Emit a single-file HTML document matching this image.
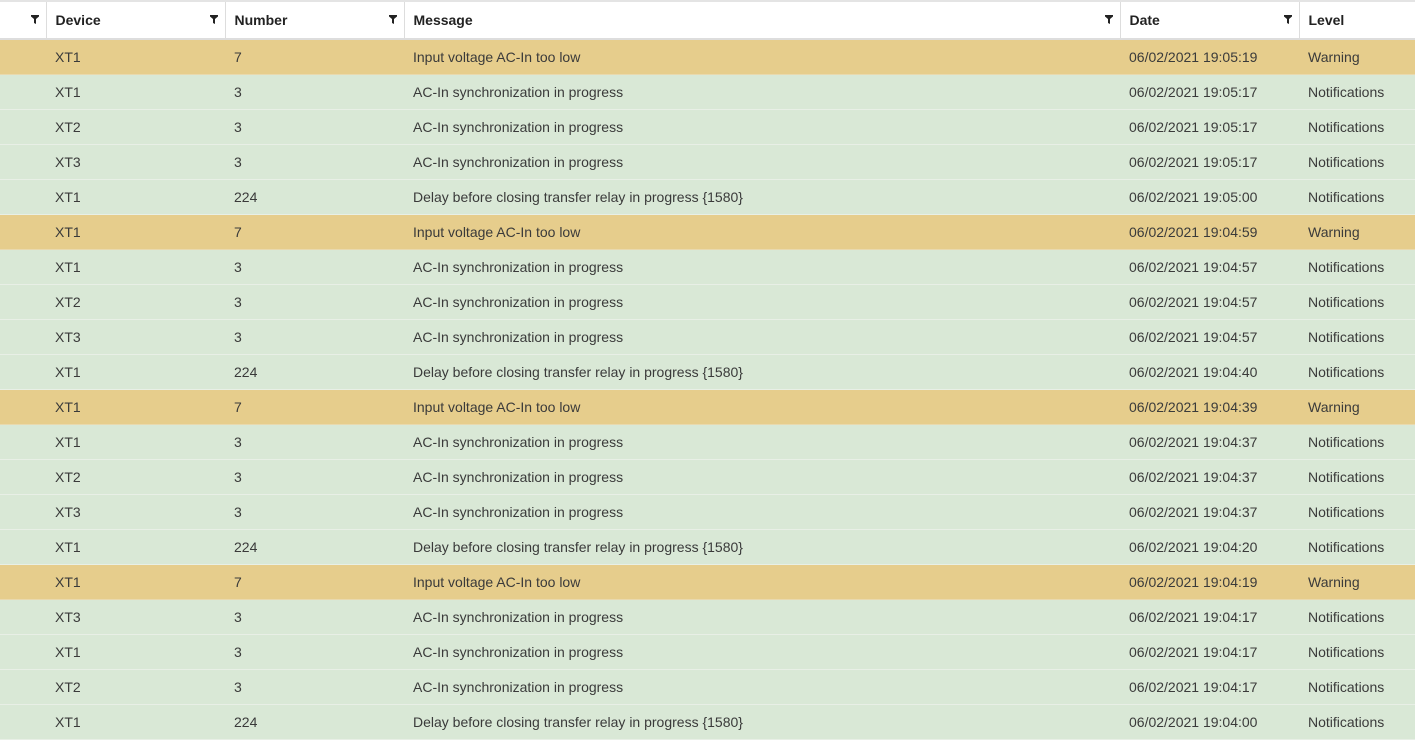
<!DOCTYPE html>
<html><head><style>
body{margin:0;width:1415px;height:733px;overflow:hidden;background:#fff;font-family:"Liberation Sans",Arial,sans-serif;font-size:14px;color:#3a3a3a}
table{border-collapse:collapse;table-layout:fixed;width:1415px}
th{height:36px;text-align:left;font-weight:bold;padding:0 0 0 9px;border-left:1px solid #ddd;border-top:2px solid #e4e4e4;border-bottom:2px solid #ddd;position:relative;color:#222}
th:first-child{border-left:none}
th svg{position:absolute;right:7px;top:13px}
td{height:34px;padding:0 0 0 9px;border-bottom:1px solid #e8efe6;white-space:nowrap}
tr.w td{background:#e6cd8c;border-bottom-color:#e9d9ae}
tr.n td{background:#d9e8d6}
</style></head><body>
<table>
<colgroup><col style="width:46px"><col style="width:179px"><col style="width:179px"><col style="width:716px"><col style="width:179px"><col style="width:116px"></colgroup>
<thead><tr>
<th><svg width="8" height="9" viewBox="0 0 8 9"><path d="M0 0H8V1.5L5 4V9L3 8V4L0 1.5Z" fill="#222"/></svg></th>
<th>Device<svg width="8" height="9" viewBox="0 0 8 9"><path d="M0 0H8V1.5L5 4V9L3 8V4L0 1.5Z" fill="#222"/></svg></th>
<th>Number<svg width="8" height="9" viewBox="0 0 8 9"><path d="M0 0H8V1.5L5 4V9L3 8V4L0 1.5Z" fill="#222"/></svg></th>
<th>Message<svg width="8" height="9" viewBox="0 0 8 9"><path d="M0 0H8V1.5L5 4V9L3 8V4L0 1.5Z" fill="#222"/></svg></th>
<th>Date<svg width="8" height="9" viewBox="0 0 8 9"><path d="M0 0H8V1.5L5 4V9L3 8V4L0 1.5Z" fill="#222"/></svg></th>
<th>Level</th>
</tr></thead>
<tbody>
<tr class="w"><td></td><td>XT1</td><td>7</td><td>Input voltage AC-In too low</td><td>06/02/2021 19:05:19</td><td>Warning</td></tr>
<tr class="n"><td></td><td>XT1</td><td>3</td><td>AC-In synchronization in progress</td><td>06/02/2021 19:05:17</td><td>Notifications</td></tr>
<tr class="n"><td></td><td>XT2</td><td>3</td><td>AC-In synchronization in progress</td><td>06/02/2021 19:05:17</td><td>Notifications</td></tr>
<tr class="n"><td></td><td>XT3</td><td>3</td><td>AC-In synchronization in progress</td><td>06/02/2021 19:05:17</td><td>Notifications</td></tr>
<tr class="n"><td></td><td>XT1</td><td>224</td><td>Delay before closing transfer relay in progress {1580}</td><td>06/02/2021 19:05:00</td><td>Notifications</td></tr>
<tr class="w"><td></td><td>XT1</td><td>7</td><td>Input voltage AC-In too low</td><td>06/02/2021 19:04:59</td><td>Warning</td></tr>
<tr class="n"><td></td><td>XT1</td><td>3</td><td>AC-In synchronization in progress</td><td>06/02/2021 19:04:57</td><td>Notifications</td></tr>
<tr class="n"><td></td><td>XT2</td><td>3</td><td>AC-In synchronization in progress</td><td>06/02/2021 19:04:57</td><td>Notifications</td></tr>
<tr class="n"><td></td><td>XT3</td><td>3</td><td>AC-In synchronization in progress</td><td>06/02/2021 19:04:57</td><td>Notifications</td></tr>
<tr class="n"><td></td><td>XT1</td><td>224</td><td>Delay before closing transfer relay in progress {1580}</td><td>06/02/2021 19:04:40</td><td>Notifications</td></tr>
<tr class="w"><td></td><td>XT1</td><td>7</td><td>Input voltage AC-In too low</td><td>06/02/2021 19:04:39</td><td>Warning</td></tr>
<tr class="n"><td></td><td>XT1</td><td>3</td><td>AC-In synchronization in progress</td><td>06/02/2021 19:04:37</td><td>Notifications</td></tr>
<tr class="n"><td></td><td>XT2</td><td>3</td><td>AC-In synchronization in progress</td><td>06/02/2021 19:04:37</td><td>Notifications</td></tr>
<tr class="n"><td></td><td>XT3</td><td>3</td><td>AC-In synchronization in progress</td><td>06/02/2021 19:04:37</td><td>Notifications</td></tr>
<tr class="n"><td></td><td>XT1</td><td>224</td><td>Delay before closing transfer relay in progress {1580}</td><td>06/02/2021 19:04:20</td><td>Notifications</td></tr>
<tr class="w"><td></td><td>XT1</td><td>7</td><td>Input voltage AC-In too low</td><td>06/02/2021 19:04:19</td><td>Warning</td></tr>
<tr class="n"><td></td><td>XT3</td><td>3</td><td>AC-In synchronization in progress</td><td>06/02/2021 19:04:17</td><td>Notifications</td></tr>
<tr class="n"><td></td><td>XT1</td><td>3</td><td>AC-In synchronization in progress</td><td>06/02/2021 19:04:17</td><td>Notifications</td></tr>
<tr class="n"><td></td><td>XT2</td><td>3</td><td>AC-In synchronization in progress</td><td>06/02/2021 19:04:17</td><td>Notifications</td></tr>
<tr class="n"><td></td><td>XT1</td><td>224</td><td>Delay before closing transfer relay in progress {1580}</td><td>06/02/2021 19:04:00</td><td>Notifications</td></tr>
</tbody></table>
</body></html>
